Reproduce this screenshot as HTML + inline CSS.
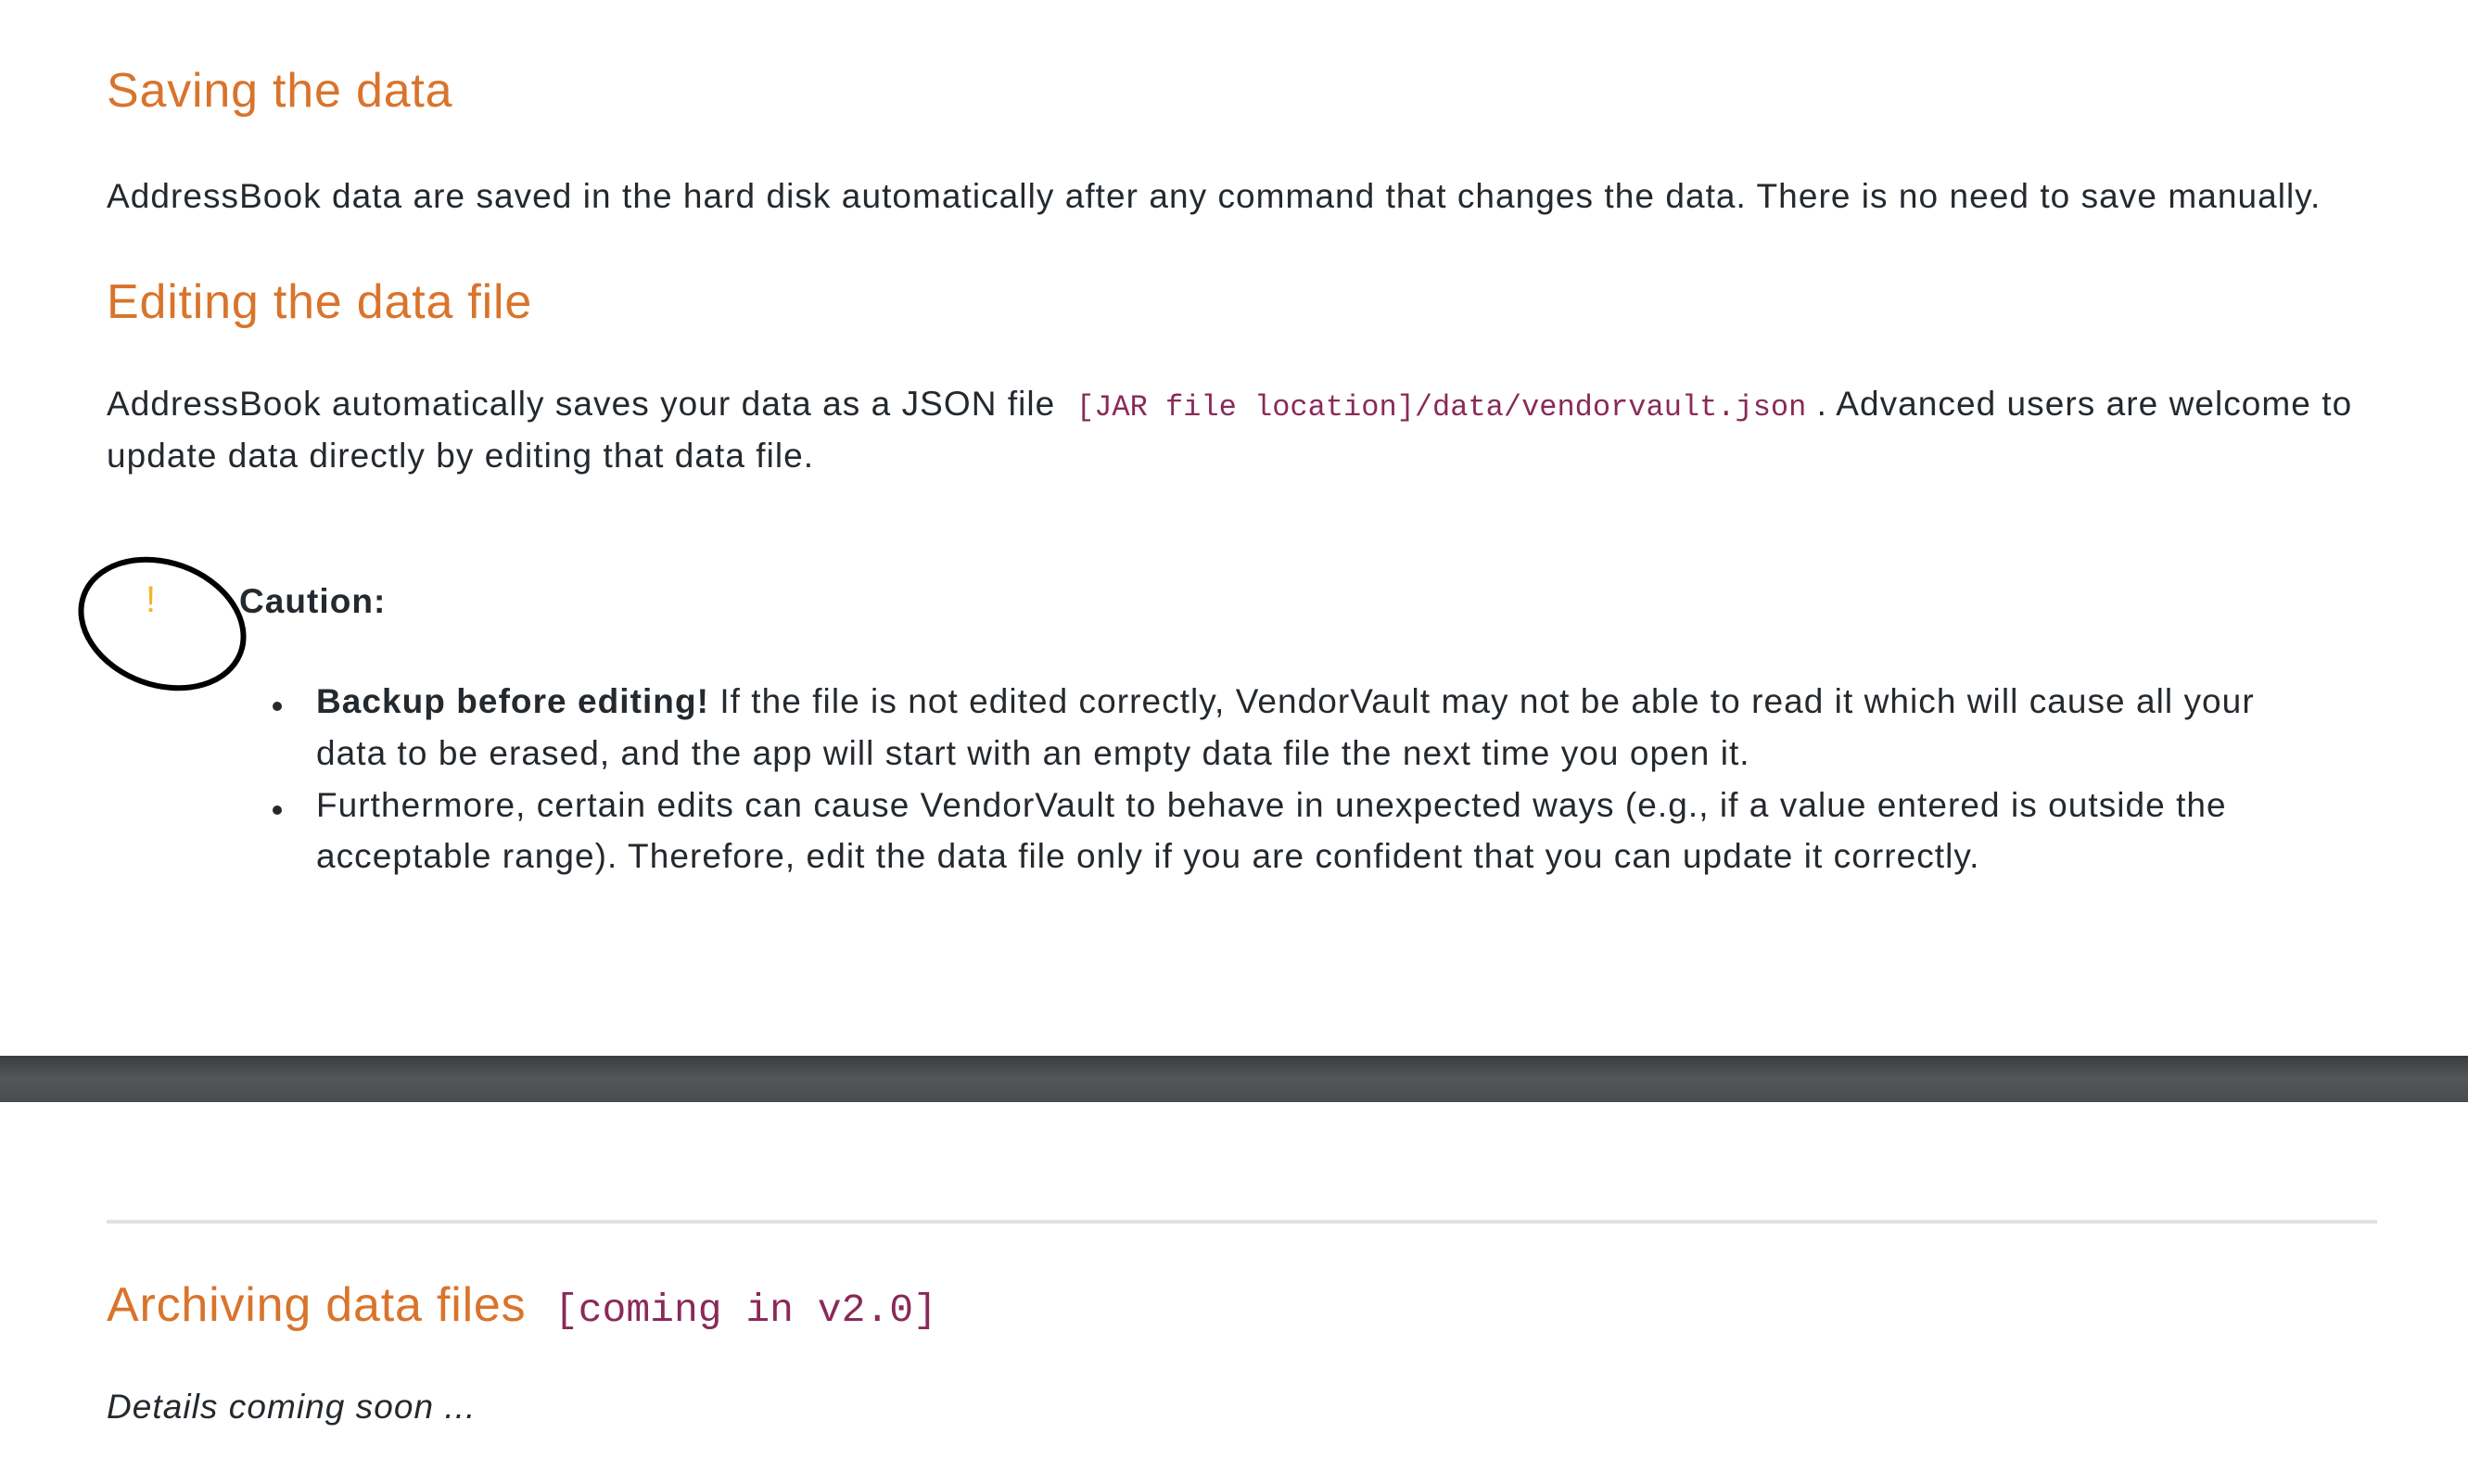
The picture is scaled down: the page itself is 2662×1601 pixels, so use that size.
<!DOCTYPE html>
<html><head><meta charset="utf-8"><style>
html,body{margin:0;padding:0;background:#fff;width:2662px;height:1601px;overflow:hidden;position:relative}
.t{position:absolute;left:115px;white-space:nowrap;font-family:"Liberation Sans",Arial,sans-serif;color:#24292e;font-size:37px;letter-spacing:1.05px;line-height:56px}
.h{color:#d9742c;font-size:52px;letter-spacing:0.8px;line-height:70px}
code{font-family:"Liberation Mono",monospace;color:#892a59;font-size:32px;letter-spacing:0}
.bar{position:absolute;left:0;top:1139px;width:2662px;height:50px;background:linear-gradient(#3b3c3f,#54565a 50%,#494b4e)}
.rule{position:absolute;left:115px;top:1316px;width:2449px;height:4px;background:#e2e2e2}
.dot{position:absolute;left:294px;width:10px;height:10px;border-radius:50%;background:#24292e}
</style></head><body>
<div class="t h" style="top:63px">Saving the data</div>
<div class="t" style="top:184px">AddressBook data are saved in the hard disk automatically after any command that changes the data. There is no need to save manually.</div>
<div class="t h" style="top:291px">Editing the data file</div>
<div class="t" style="top:408px">AddressBook automatically saves your data as a JSON file &nbsp;<code>[JAR file location]/data/vendorvault.json</code> . Advanced users are welcome to</div>
<div class="t" style="top:464px">update data directly by editing that data file.</div>
<svg style="position:absolute;left:75px;top:595px" width="210" height="160"><ellipse cx="100" cy="78" rx="90" ry="66" transform="rotate(20 100 78)" fill="none" stroke="#000" stroke-width="6"/></svg>
<div class="t" style="left:157px;top:619px;color:#f2b530;font-size:40px">!</div>
<div class="t" style="left:258px;top:621px;font-weight:bold">Caution:</div>
<div class="dot" style="top:757px"></div>
<div class="t" style="left:341px;top:729px"><b>Backup before editing!</b> If the file is not edited correctly, VendorVault may not be able to read it which will cause all your</div>
<div class="t" style="left:341px;top:785px">data to be erased, and the app will start with an empty data file the next time you open it.</div>
<div class="dot" style="top:869px"></div>
<div class="t" style="left:341px;top:841px">Furthermore, certain edits can cause VendorVault to behave in unexpected ways (e.g., if a value entered is outside the</div>
<div class="t" style="left:341px;top:896px">acceptable range). Therefore, edit the data file only if you are confident that you can update it correctly.</div>
<div class="bar"></div>
<div class="rule"></div>
<div class="t h" style="top:1373px">Archiving data files &nbsp;<code style="font-size:43px">[coming in v2.0]</code></div>
<div class="t" style="top:1490px;font-style:italic">Details coming soon ...</div>
</body></html>
